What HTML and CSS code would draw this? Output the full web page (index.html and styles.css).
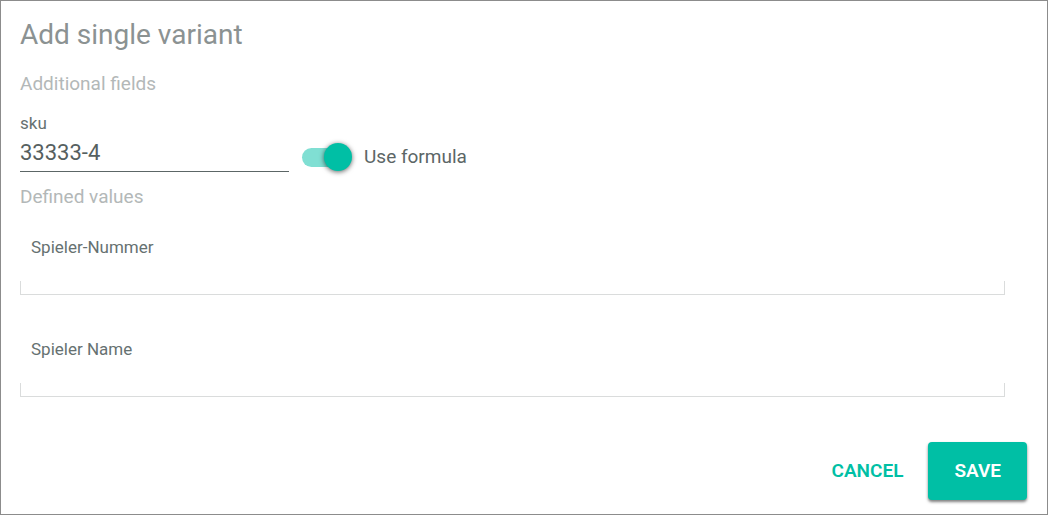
FILE: index.html
```html
<!DOCTYPE html>
<html lang="en">
<head>
<meta charset="utf-8">
<title>Add single variant</title>
<link rel="stylesheet" href="styles.css">
</head>
<body>
<form class="dialog">
  <h1 class="title">Add single variant</h1>
  <h2 class="subhead">Additional fields</h2>
  <div class="sku-row">
    <div class="sku-field">
      <label class="label" for="sku">sku</label>
      <input class="sku-input" id="sku" type="text" value="33333-4">
    </div>
    <label class="switch"><input class="switch-input" type="checkbox" role="switch" checked>Use formula</label>
  </div>
  <h2 class="subhead">Defined values</h2>
  <div class="values">
    <div class="value-field">
      <label class="label value-label" for="number">Spieler-Nummer</label>
      <input class="value-input" id="number" type="text">
    </div>
    <div class="value-field">
      <label class="label value-label" for="name">Spieler Name</label>
      <input class="value-input" id="name" type="text">
    </div>
  </div>
  <div class="actions">
    <button class="button" type="button">CANCEL</button>
    <button class="button button-primary" type="button">SAVE</button>
  </div>
</form>
</body>
</html>
```

FILE: styles.css
```css
* {
  box-sizing: border-box;
}

body {
  margin: 0;
  background: #fff;
  color: #5c6666;
  font-family: Roboto, "Liberation Sans", sans-serif;
}

.dialog {
  display: flex;
  flex-direction: column;
  min-height: 100vh;
  padding: 18px 20px 14px 19px;
  border: 1px solid #8c8c8c;
}

.title {
  margin: 0 0 21px;
  color: #8b9292;
  font-size: 28px;
  font-weight: 400;
  line-height: 32px;
}

.subhead {
  margin: 0;
  color: #b3b8b8;
  font-size: 19px;
  font-weight: 400;
  line-height: 24px;
}

.sku-row {
  display: flex;
  align-items: flex-end;
  gap: 13px;
  margin: 17px 0 13px;
}

.sku-field {
  display: flex;
  flex-direction: column;
  width: 269px;
}

.label {
  color: #667171;
  font-size: 17px;
  line-height: 20px;
}

.sku-input {
  width: 100%;
  height: 39px;
  padding: 0;
  border: 0;
  border-bottom: 1px solid #5c6666;
  background: none;
  color: #566060;
  font: 400 22px/38px Roboto, "Liberation Sans", sans-serif;
}

.switch {
  display: flex;
  align-items: center;
  gap: 12px;
  font-size: 19px;
  line-height: 30px;
}

.switch-input {
  display: flex;
  align-items: center;
  appearance: none;
  width: 50px;
  height: 28px;
  margin: 0;
}

.switch-input::before {
  content: "";
  flex: none;
  width: 36px;
  height: 19px;
  border-radius: 10px;
  background: #80dfd3;
}

.switch-input::after {
  content: "";
  flex: none;
  width: 28px;
  height: 28px;
  margin-left: -14px;
  border-radius: 50%;
  background: #00bfa5;
  box-shadow: 0 1px 5px rgba(0, 0, 0, 0.6);
}

.values {
  display: flex;
  flex-direction: column;
  gap: 44px;
  margin: 28px 22px 45px 0;
}

.value-field {
  display: flex;
  flex-direction: column;
}

.value-label {
  padding-left: 11px;
}

.value-input {
  width: 100%;
  height: 38px;
  padding: 0 11px;
  border: 0;
  border-bottom: 1px solid #dadcdc;
  background:
    linear-gradient(#dadcdc, #dadcdc) left bottom / 1px 13px no-repeat,
    linear-gradient(#dadcdc, #dadcdc) right bottom / 1px 13px no-repeat;
  font: 400 17px/20px Roboto, "Liberation Sans", sans-serif;
}

.actions {
  display: flex;
  justify-content: flex-end;
}

.button {
  height: 58px;
  padding: 0 25px;
  border: 0;
  border-radius: 4px;
  background: none;
  color: #00bfa5;
  font: 600 19px/24px Roboto, "Liberation Sans", sans-serif;
}

.button-primary {
  padding: 0 26px;
  background: #00bfa5;
  box-shadow: 0 2px 3px rgba(0, 0, 0, 0.5);
  color: #fff;
}
```
